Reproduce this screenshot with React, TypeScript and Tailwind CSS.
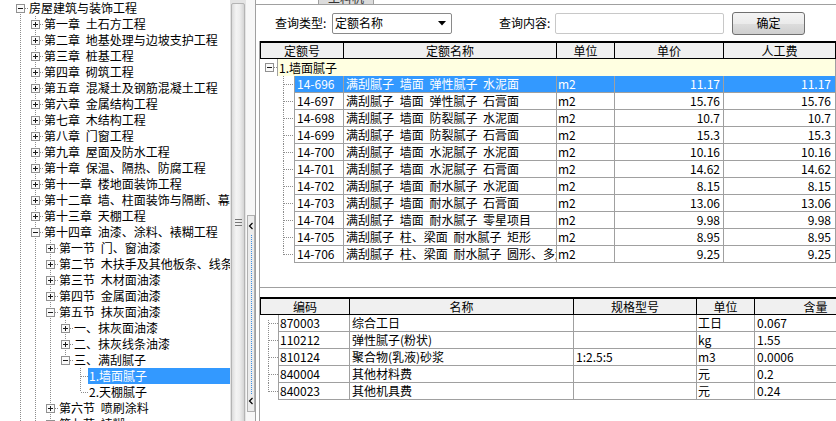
import React from 'react';

const DOT = '#8c8c8c';

function VDots({ x, y1, y2 }: { x: number; y1: number; y2: number }) {
  return <line x1={x + 0.5} x2={x + 0.5} y1={y1} y2={y2} stroke={DOT} strokeDasharray="1 1" shapeRendering="crispEdges" />;
}
function HDots({ y, x1, x2 }: { y: number; x1: number; x2: number }) {
  return <line y1={y + 0.5} y2={y + 0.5} x1={x1} x2={x2} stroke={DOT} strokeDasharray="1 1" shapeRendering="crispEdges" />;
}
function Box({ x, y, open }: { x: number; y: number; open: boolean }) {
  return (
    <g shapeRendering="crispEdges">
      <rect x={x + 0.5} y={y + 0.5} width={8} height={8} fill="#fafafa" stroke="#919191" />
      <line x1={x + 2} x2={x + 7} y1={y + 4.5} y2={y + 4.5} stroke="#1a1a1a" />
      {!open && <line x1={x + 4.5} x2={x + 4.5} y1={y + 2} y2={y + 7} stroke="#1a1a1a" />}
    </g>
  );
}

type TNode = {
  level: number;
  text: string;
  kind: 'open' | 'closed' | 'leaf';
  guides: boolean[];
  hasNext: boolean;
  first?: boolean;
  selected?: boolean;
};

const chapters = [
  '第一章 土石方工程',
  '第二章 地基处理与边坡支护工程',
  '第三章 桩基工程',
  '第四章 砌筑工程',
  '第五章 混凝土及钢筋混凝土工程',
  '第六章 金属结构工程',
  '第七章 木结构工程',
  '第八章 门窗工程',
  '第九章 屋面及防水工程',
  '第十章 保温、隔热、防腐工程',
  '第十一章 楼地面装饰工程',
  '第十二章 墙、柱面装饰与隔断、幕墙工程',
  '第十三章 天棚工程',
];

const nodes: TNode[] = [
  { level: 0, text: '房屋建筑与装饰工程', kind: 'open', guides: [], hasNext: true, first: true },
  ...chapters.map((t) => ({ level: 1, text: t, kind: 'closed' as const, guides: [true], hasNext: true })),
  { level: 1, text: '第十四章 油漆、涂料、裱糊工程', kind: 'open', guides: [true], hasNext: true },
  { level: 2, text: '第一节 门、窗油漆', kind: 'closed', guides: [true, true], hasNext: true },
  { level: 2, text: '第二节 木扶手及其他板条、线条油漆', kind: 'closed', guides: [true, true], hasNext: true },
  { level: 2, text: '第三节 木材面油漆', kind: 'closed', guides: [true, true], hasNext: true },
  { level: 2, text: '第四节 金属面油漆', kind: 'closed', guides: [true, true], hasNext: true },
  { level: 2, text: '第五节 抹灰面油漆', kind: 'open', guides: [true, true], hasNext: true },
  { level: 3, text: '一、抹灰面油漆', kind: 'closed', guides: [true, true, true], hasNext: true },
  { level: 3, text: '二、抹灰线条油漆', kind: 'closed', guides: [true, true, true], hasNext: true },
  { level: 3, text: '三、满刮腻子', kind: 'open', guides: [true, true, true], hasNext: false },
  { level: 4, text: '1.墙面腻子', kind: 'leaf', guides: [true, true, true, false], hasNext: true, selected: true },
  { level: 4, text: '2.天棚腻子', kind: 'leaf', guides: [true, true, true, false], hasNext: false },
  { level: 2, text: '第六节 喷刷涂料', kind: 'closed', guides: [true, true], hasNext: true },
  { level: 2, text: '第七节 裱糊', kind: 'closed', guides: [true, true], hasNext: true },
];

function TreeRow({ n }: { n: TNode }) {
  return (
    <div className="flex h-[16px] pl-[16px] shrink-0">
      {n.guides.map((g, i) => (
        <svg key={i} width={15} height={16} className="shrink-0 block">
          {g && <VDots x={4} y1={0} y2={16} />}
        </svg>
      ))}
      <svg width={12} height={16} className="shrink-0 block">
        {!n.first && <VDots x={4} y1={0} y2={8} />}
        {n.hasNext && <VDots x={4} y1={8} y2={16} />}
        <HDots y={8} x1={5} x2={12} />
        {n.kind !== 'leaf' && <Box x={0} y={4} open={n.kind === 'open'} />}
      </svg>
      <div
        className={`flex-1 pl-[1px] h-[16px] leading-[16px] whitespace-nowrap overflow-hidden [word-spacing:3px] ${
          n.selected ? 'bg-[#3399ff] text-white' : ''
        }`}
      >
        {n.text}
      </div>
    </div>
  );
}

function TreePanel() {
  return (
    <div className="w-[230px] h-full overflow-hidden flex flex-col shrink-0 bg-white">
      {nodes.map((n, i) => (
        <TreeRow key={i} n={n} />
      ))}
    </div>
  );
}

function ScrollBar() {
  return (
    <div className="w-[16px] h-full shrink-0 bg-[#e4e4e4] overflow-hidden">
      <div className="mt-[3px] mx-[1px] h-[438px] rounded-[2px] border border-[#b4b4b4] bg-[linear-gradient(to_right,#dcdcdc,#f4f4f4_35%,#ededed_65%,#d4d4d4)] flex items-center justify-center">
        <div className="flex flex-col gap-[2px]">
          <div className="w-[7px] h-[1px] bg-[#777]" />
          <div className="w-[7px] h-[1px] bg-[#777]" />
          <div className="w-[7px] h-[1px] bg-[#777]" />
        </div>
      </div>
    </div>
  );
}

function Splitter() {
  return (
    <div className="w-[10px] h-full shrink-0 bg-[#f7f7f7] border-r border-[#a0a0a0] flex flex-col">
      <div className="h-[215px] shrink-0" />
      <div className="ml-[1px] w-[8px] h-[197px] border border-[#b0b0b0] bg-[#ececec] flex flex-col items-center">
        <svg width={6} height={12} className="block mt-[5px]">
          <path d="M4.5 2 L1.5 5 L4.5 8" fill="none" stroke="#000" strokeWidth={1.2} />
        </svg>
        <div className="flex-1 w-0 border-l border-dotted border-[#3a8ee6] my-[2px]" />
        <svg width={6} height={12} className="block mb-[3px]">
          <path d="M4.5 2 L1.5 5 L4.5 8" fill="none" stroke="#000" strokeWidth={1.2} />
        </svg>
      </div>
    </div>
  );
}

const rows1 = [
  ['14-696', '满刮腻子 墙面 弹性腻子 水泥面', 'm2', '11.17', '11.17'],
  ['14-697', '满刮腻子 墙面 弹性腻子 石膏面', 'm2', '15.76', '15.76'],
  ['14-698', '满刮腻子 墙面 防裂腻子 水泥面', 'm2', '10.7', '10.7'],
  ['14-699', '满刮腻子 墙面 防裂腻子 石膏面', 'm2', '15.3', '15.3'],
  ['14-700', '满刮腻子 墙面 水泥腻子 水泥面', 'm2', '10.16', '10.16'],
  ['14-701', '满刮腻子 墙面 水泥腻子 石膏面', 'm2', '14.62', '14.62'],
  ['14-702', '满刮腻子 墙面 耐水腻子 水泥面', 'm2', '8.15', '8.15'],
  ['14-703', '满刮腻子 墙面 耐水腻子 石膏面', 'm2', '13.06', '13.06'],
  ['14-704', '满刮腻子 墙面 耐水腻子 零星项目', 'm2', '9.98', '9.98'],
  ['14-705', '满刮腻子 柱、梁面 耐水腻子 矩形', 'm2', '8.95', '8.95'],
  ['14-706', '满刮腻子 柱、梁面 耐水腻子 圆形、多边形', 'm2', '9.25', '9.25'],
];

const rows2 = [
  ['870003', '综合工日', '', '工日', '0.067'],
  ['110212', '弹性腻子(粉状)', '', 'kg', '1.55'],
  ['810124', '聚合物(乳液)砂浆', '1:2.5:5', 'm3', '0.0006'],
  ['840004', '其他材料费', '', '元', '0.2'],
  ['840023', '其他机具费', '', '元', '0.24'],
];

const cell = 'h-full border-r border-[#a0a0a0] overflow-hidden whitespace-nowrap leading-[16px] shrink-0';

function Grid1() {
  return (
    <div className="h-[247px] shrink-0 border-b border-[#a0a0a0] flex flex-col overflow-hidden">
      <div className="flex h-[18px] shrink-0 border-t-2 border-b border-black bg-[#f0f0f0] leading-[15px]">
        <div className="w-[1px] bg-black shrink-0" />
        <div className="w-[83px] border-r border-black text-center shrink-0">定额号</div>
        <div className="w-[213px] border-r border-black text-center shrink-0">定额名称</div>
        <div className="w-[58px] border-r border-black text-center shrink-0">单位</div>
        <div className="w-[109px] border-r border-black text-center shrink-0">单价</div>
        <div className="w-[112px] border-r border-black text-center shrink-0">人工费</div>
      </div>
      <div className="flex h-[17px] shrink-0">
        <svg width={17} height={17} className="block shrink-0">
          <HDots y={8} x1={14} x2={17} />
          <Box x={5} y={4} open={true} />
        </svg>
        <div className="w-[559px] h-full bg-[#ffffe1] border-l border-r border-[#a0a0a0] pl-[1px] leading-[17px] shrink-0">
          1.墙面腻子
        </div>
      </div>
      {rows1.map((r, i) => {
        const sel = i === 0;
        const last = i === rows1.length - 1;
        return (
          <div key={r[0]} className="flex h-[17px] shrink-0">
            <svg width={34} height={17} className="block shrink-0">
              <VDots x={23} y1={0} y2={last ? 9 : 17} />
              <HDots y={8} x1={24} x2={34} />
            </svg>
            <div
              className={`flex border-b border-l border-[#a0a0a0] h-[17px] [word-spacing:3px] ${
                sel ? 'bg-[#3399ff] text-white' : ''
              }`}
            >
              <div className={`${cell} w-[49px] pl-[2px]`}>{r[0]}</div>
              <div className={`${cell} w-[213px] pl-[2px]`}>{r[1]}</div>
              <div className={`${cell} w-[58px] pl-[1px]`}>{r[2]}</div>
              <div className={`${cell} w-[109px] pr-[3px] text-right`}>{r[3]}</div>
              <div className={`${cell} w-[112px] pr-[4px] text-right`}>{r[4]}</div>
            </div>
          </div>
        );
      })}
    </div>
  );
}

function Grid2() {
  return (
    <div className="flex flex-col w-[617px] shrink-0">
      <div className="flex h-[18px] shrink-0 border-t-2 border-b border-black bg-[#f0f0f0] leading-[15px]">
        <div className="w-[1px] bg-black shrink-0" />
        <div className="w-[89px] border-r border-black text-center shrink-0">编码</div>
        <div className="w-[224px] border-r border-black text-center shrink-0">名称</div>
        <div className="w-[123px] border-r border-black text-center shrink-0">规格型号</div>
        <div className="w-[58px] border-r border-black text-center shrink-0">单位</div>
        <div className="w-[121px] text-center shrink-0">含量</div>
      </div>
      {rows2.map((r, i) => {
        const first = i === 0;
        const last = i === rows2.length - 1;
        return (
          <div key={r[0]} className="flex h-[17px] shrink-0">
            <svg width={18} height={17} className="block shrink-0">
              <VDots x={8} y1={first ? 5 : 0} y2={last ? 9 : 17} />
              <HDots y={8} x1={9} x2={18} />
            </svg>
            <div className="flex border-b border-l border-[#a0a0a0] h-[17px]">
              <div className={`${cell} w-[71px] pl-[1px]`}>{r[0]}</div>
              <div className={`${cell} w-[224px] pl-[2px]`}>{r[1]}</div>
              <div className={`${cell} w-[123px] pl-[2px]`}>{r[2]}</div>
              <div className={`${cell} w-[58px] pl-[1px]`}>{r[3]}</div>
              <div className={`${cell} w-[122px] pl-[2px] border-r-0`}>{r[4]}</div>
            </div>
          </div>
        );
      })}
    </div>
  );
}

function RightPanel() {
  return (
    <div className="w-[580px] h-full flex flex-col shrink-0 overflow-hidden">
      <div className="h-[5px] shrink-0 flex items-end">
        <div className="w-[62px] h-[5px] border-b border-[#a0a0a0] shrink-0" />
        <div className="w-[56px] h-[5px] bg-[#dcdcdc] border-x border-b border-[#a0a0a0] shrink-0 overflow-hidden">
          <div className="leading-[12px] -mt-[8px] text-center text-[#333]">工料机</div>
        </div>
        <div className="flex-1 h-[5px] border-b border-[#a0a0a0]" />
      </div>
      <div className="h-[36px] shrink-0 flex items-center pl-[19px]">
        <div className="w-[57px] shrink-0 whitespace-nowrap">查询类型:</div>
        <div className="w-[120px] h-[21px] shrink-0 border border-[#8a8a8a] rounded-[2px] bg-white flex items-center pl-[2px] pr-[5px]">
          <span className="flex-1 leading-[16px]">定额名称</span>
          <svg width={8} height={5} className="block">
            <path d="M0 0 L8 0 L4 4.5 Z" fill="#000" />
          </svg>
        </div>
        <div className="w-[47px] shrink-0" />
        <div className="w-[56px] shrink-0 whitespace-nowrap">查询内容:</div>
        <div className="w-[169px] h-[21px] shrink-0 border border-[#c8c8c8] rounded-[2px] bg-white" />
        <div className="w-[8px] shrink-0" />
        <div className="w-[73px] h-[23px] shrink-0 border border-[#707070] rounded-[3px] bg-[linear-gradient(to_bottom,#f4f4f4,#ebebeb_50%,#dddddd_51%,#cfcfcf)] flex items-center justify-center leading-[16px]">
          确定
        </div>
      </div>
      <div className="ml-[3px] flex-1 border-l border-[#a0a0a0] flex flex-col overflow-hidden">
        <Grid1 />
        <div className="h-[9px] shrink-0" />
        <Grid2 />
      </div>
    </div>
  );
}

export default function App() {
  return (
    <div className="w-[836px] h-[421px] overflow-hidden bg-white flex font-['Noto_Sans_CJK_SC',sans-serif] text-[12px] text-black">
      <TreePanel />
      <ScrollBar />
      <Splitter />
      <RightPanel />
    </div>
  );
}
